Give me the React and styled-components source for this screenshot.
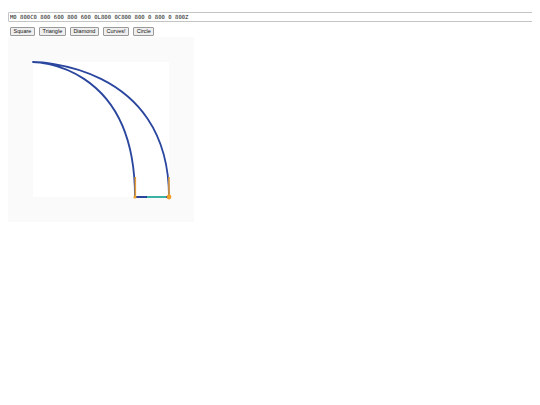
import React, { useState } from "react";
import styled, { createGlobalStyle } from "styled-components";

const Global = createGlobalStyle`
  html, body { background: #ffffff; }
  body { margin: 8px; font-family: "Liberation Sans", Arial, sans-serif; }
`;

const PathInput = styled.input`
  display: block;
  box-sizing: border-box;
  width: 527px;
  height: 10px;
  margin: 4px 0 0 0;
  padding: 0 1px;
  border: 1px solid #c4c4c4;
  border-radius: 1px;
  font-family: "DejaVu Sans Mono", monospace;
  font-size: 5.6px;
  color: #111;
  background: #fff;
  outline: none;
`;

const Toolbar = styled.div`
  display: flex;
  gap: 4px;
  margin: 5px 0 1px 2px;
`;

const ShapeButton = styled.button`
  box-sizing: border-box;
  height: 9px;
  padding: 0 2.6px;
  border: 1px solid #9a9a9a;
  border-radius: 1px;
  background: #efefef;
  font-family: "Liberation Sans", Arial, sans-serif;
  font-size: 5.5px;
  line-height: 7px;
  color: #111;
  cursor: pointer;
`;

const Canvas = styled.svg`
  display: block;
  width: 186px;
  height: 185px;
  background: #fafafa;
`;

const shapes = ["Square", "Triangle", "Diamond", "Curves!", "Circle"];

export default function App() {
  const [d, setD] = useState("M0 800C0 800 600 800 600 0L800 0C800 800 0 800 0 800Z");
  return (
    <>
      <Global />
      <PathInput value={d} onChange={(e) => setD(e.target.value)} />
      <Toolbar>
        {shapes.map((s) => (
          <ShapeButton key={s}>{s}</ShapeButton>
        ))}
      </Toolbar>
      <Canvas viewBox="0 0 186 185">
        <rect x="25" y="25" width="136" height="135" fill="#ffffff" />
        <path
          d="M25 25C25 25 127 25 127 160L161 160C161 25 25 25 25 25Z"
          fill="none"
          stroke="#2a469e"
          strokeWidth="1.8"
          strokeLinejoin="round"
        />
        <line x1="127.3" y1="140" x2="127.3" y2="160" stroke="#e39d3a" strokeWidth="1.6" />
        <line x1="161" y1="140" x2="161" y2="160" stroke="#e39d3a" strokeWidth="1.6" />
        <line x1="127" y1="160" x2="139" y2="160" stroke="#2a469e" strokeWidth="1.8" />
        <line x1="139" y1="160" x2="158" y2="160" stroke="#3fbfa3" strokeWidth="1.8" />
        <circle cx="127" cy="160" r="1.6" fill="#f0a028" />
        <circle cx="161" cy="160" r="2.4" fill="#f0a028" />
      </Canvas>
    </>
  );
}
